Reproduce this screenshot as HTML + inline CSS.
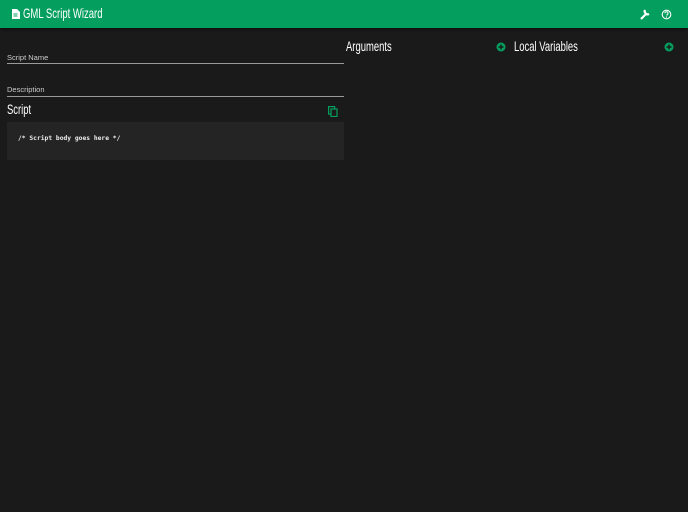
<!DOCTYPE html>
<html><head><style>
body{margin:0;width:688px;height:512px;background:#1a1a1a;font-family:"Liberation Sans",sans-serif;overflow:hidden;position:relative;color:#fff}
.hdr{position:absolute;left:0;top:0;width:688px;height:28px;background:#049e5e;box-shadow:0 1px 3px rgba(0,0,0,.6)}
.cond{font-family:"Liberation Sans Narrow","Liberation Sans",sans-serif;transform-origin:left}
.t{position:absolute;white-space:nowrap}
.line{position:absolute;height:1px;background:#9a9a9a}
.lab{font-size:7.5px;color:#ccc}
.code{position:absolute;left:7px;top:122px;width:337px;height:38px;background:#242424}
</style></head><body>
<div class="hdr"></div>
<svg class="t" style="left:11px;top:9px" width="9" height="10" viewBox="0 0 9 10"><path d="M1 0h5l3 3v7H1z" fill="#fff"/><path d="M2.5 5h4M2.5 7h4" stroke="#049e5e" stroke-width="1"/></svg>
<div class="t cond" style="left:23px;top:5px;font-size:14px;transform:scaleX(.68)">GML Script Wizard</div>
<svg class="t" style="left:639px;top:9px" width="11" height="11" viewBox="0 0 11 11"><path d="M2 10L7 5M6 1a3 3 0 0 0 4 4" stroke="#fff" stroke-width="2.2" fill="none"/></svg>
<svg class="t" style="left:661px;top:9px" width="11" height="11" viewBox="0 0 11 11"><circle cx="5.5" cy="5.5" r="4.3" stroke="#fff" stroke-width="1.1" fill="none"/><path d="M4 4.3a1.5 1.5 0 1 1 2 1.3v1" stroke="#fff" stroke-width="1" fill="none"/><circle cx="5.5" cy="8" r=".6" fill="#fff"/></svg>
<div class="t lab" style="left:7px;top:53px">Script Name</div>
<div class="line" style="left:7px;top:63px;width:337px"></div>
<div class="t lab" style="left:7px;top:85px">Description</div>
<div class="line" style="left:7px;top:96px;width:337px"></div>
<div class="t cond" style="left:7px;top:102px;font-size:13.5px;transform:scaleX(.7)">Script</div>
<svg class="t" style="left:328px;top:106px" width="10" height="11" viewBox="0 0 10 11"><rect x="0.6" y="0.6" width="6" height="7.5" stroke="#049e5e" stroke-width="1.2" fill="none"/><rect x="3" y="3" width="6" height="7.5" stroke="#049e5e" stroke-width="1.2" fill="#1a1a1a"/></svg>
<div class="code"></div>
<div class="t" style="left:18px;top:135px;font-family:'DejaVu Sans Mono',monospace;font-size:6.3px;color:#eee;font-weight:bold">/* Script body goes here */</div>
<div class="t cond" style="left:346px;top:39px;font-size:13.5px;transform:scaleX(.7)">Arguments</div>
<div class="t cond" style="left:514px;top:39px;font-size:13.5px;transform:scaleX(.7)">Local Variables</div>
<svg class="t" style="left:496px;top:42px" width="10" height="10" viewBox="0 0 10 10"><circle cx="5" cy="5" r="4.5" fill="#049e5e"/><path d="M5 2.5v5M2.5 5h5" stroke="#1a1a1a" stroke-width="1.4"/></svg>
<svg class="t" style="left:664px;top:42px" width="10" height="10" viewBox="0 0 10 10"><circle cx="5" cy="5" r="4.5" fill="#049e5e"/><path d="M5 2.5v5M2.5 5h5" stroke="#1a1a1a" stroke-width="1.4"/></svg>
</body></html>
